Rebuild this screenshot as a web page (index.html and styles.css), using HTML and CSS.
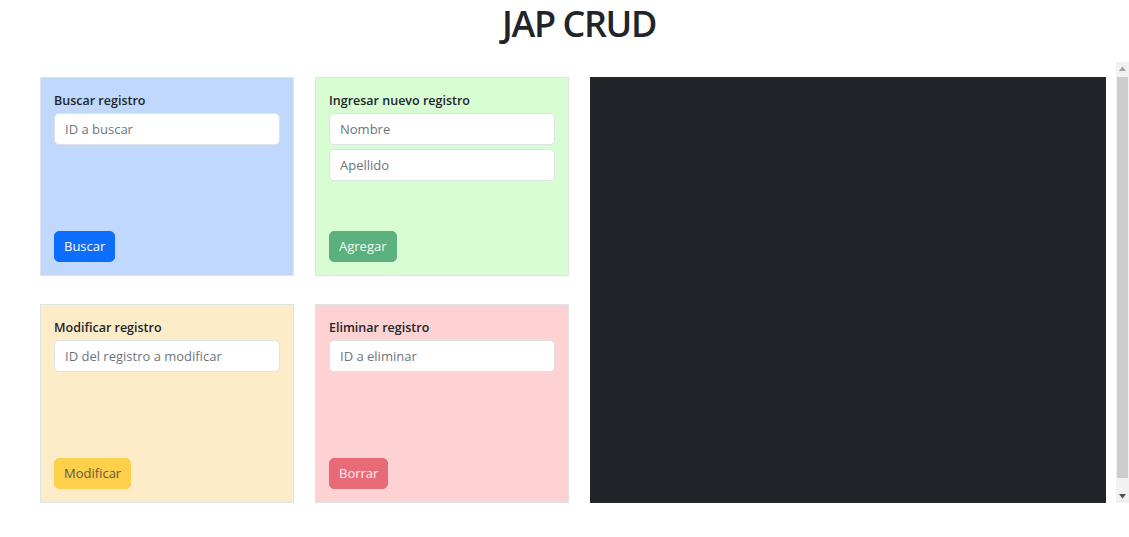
FILE: index.html
```html
<!DOCTYPE html>
<html lang="es">
<head>
<meta charset="utf-8">
<title>JAP CRUD</title>
<link rel="stylesheet" href="styles.css">
</head>
<body>
<header class="header">
  <h1 class="title">JAP CRUD</h1>
</header>
<main class="viewport">
  <div class="grid">
    <section class="card card-blue">
      <label class="card-label" for="inputGet1Id">Buscar registro</label>
      <input class="field" id="inputGet1Id" type="text" placeholder="ID a buscar">
      <button class="btn btn-primary" type="button">Buscar</button>
    </section>
    <section class="card card-green">
      <label class="card-label" for="inputPostNombre">Ingresar nuevo registro</label>
      <input class="field field-stack" id="inputPostNombre" type="text" placeholder="Nombre">
      <input class="field" type="text" placeholder="Apellido">
      <button class="btn btn-success" type="button" disabled>Agregar</button>
    </section>
    <div class="results"></div>
    <section class="card card-yellow">
      <label class="card-label" for="inputPutId">Modificar registro</label>
      <input class="field" id="inputPutId" type="text" placeholder="ID del registro a modificar">
      <button class="btn btn-warning" type="button" disabled>Modificar</button>
    </section>
    <section class="card card-red">
      <label class="card-label" for="inputDelete">Eliminar registro</label>
      <input class="field" id="inputDelete" type="text" placeholder="ID a eliminar">
      <button class="btn btn-danger" type="button" disabled>Borrar</button>
    </section>
  </div>
  <div class="scrollbar" aria-hidden="true">
    <div class="sb-btn">
      <svg width="7" height="5" viewBox="0 0 7 5"><path d="M0 5 L3.5 0.5 L7 5 Z" fill="#a3a3a3"/></svg>
    </div>
    <div class="sb-track"><div class="sb-thumb"></div></div>
    <div class="sb-btn">
      <svg width="7" height="5" viewBox="0 0 7 5"><path d="M0 0 L3.5 4.5 L7 0 Z" fill="#505050"/></svg>
    </div>
  </div>
</main>
</body>
</html>
```

FILE: styles.css
```css
* { box-sizing: border-box; }

html, body {
  margin: 0;
  padding: 0;
  background: #fff;
  color: #212529;
  font-family: "Open Sans", "Noto Sans", "Liberation Sans", sans-serif;
  font-size: 13px;
}

.header {
  height: 62px;
  padding-left: 29px;
  text-align: center;
}

.title {
  margin: 0;
  font-size: 36px;
  font-weight: 600;
  line-height: 47px;
  color: #212529;
  letter-spacing: -1.4px;
}

.viewport {
  display: flex;
  height: 441px;
}

.grid {
  flex: 1;
  min-width: 0;
  overflow: hidden;
  display: grid;
  grid-template-columns: 254px 254px 1fr;
  grid-template-rows: 199px 199px;
  column-gap: 21px;
  row-gap: 28px;
  padding: 15px 10px 15px 40px;
}

.scrollbar {
  width: 13px;
  display: flex;
  flex-direction: column;
  background: #f1f1f1;
}

.sb-btn {
  height: 13px;
  display: flex;
  align-items: center;
  justify-content: center;
}

.sb-track {
  flex: 1;
  padding: 2px 1px 12px 1px;
}

.sb-thumb {
  height: 100%;
  background: #cdcdcd;
}

.card {
  display: flex;
  flex-direction: column;
  align-items: flex-start;
  padding: 13px;
  border: 1px solid #dfe3e8;
}

.card-blue { background: #bfd8fc; }
.card-green { background: #d9fdd3; }
.card-yellow { background: #feecc8; }
.card-red { background: #fed2d3; }

.card-label {
  font-size: 12.5px;
  font-weight: 600;
  line-height: 20px;
  margin-bottom: 2px;
  color: #212529;
}

.field {
  width: 100%;
  height: 32px;
  padding: 0 10px;
  border: 1px solid #dee2e6;
  border-radius: 5px;
  background: #fff;
  font-family: inherit;
  font-size: 13px;
  color: #212529;
  outline: none;
}
.field::placeholder { color: #6c757d; }
.field-stack { margin-bottom: 4px; }

.btn {
  margin-top: auto;
  height: 31px;
  padding: 0 9px;
  border: 1px solid transparent;
  border-radius: 5px;
  font-family: inherit;
  font-size: 13px;
  line-height: 29px;
  cursor: pointer;
}
.btn:disabled { opacity: 0.65; cursor: default; }

.btn-primary { background: #0d6efd; border-color: #0d6efd; color: #fff; }
.btn-success { background: #198754; border-color: #198754; color: #fff; }
.btn-warning { background: #ffc107; border-color: #ffc107; color: #000; }
.btn-danger { background: #dc3545; border-color: #dc3545; color: #fff; }

.results {
  grid-column: 3;
  grid-row: 1 / span 2;
  background: #212529;
}
```
